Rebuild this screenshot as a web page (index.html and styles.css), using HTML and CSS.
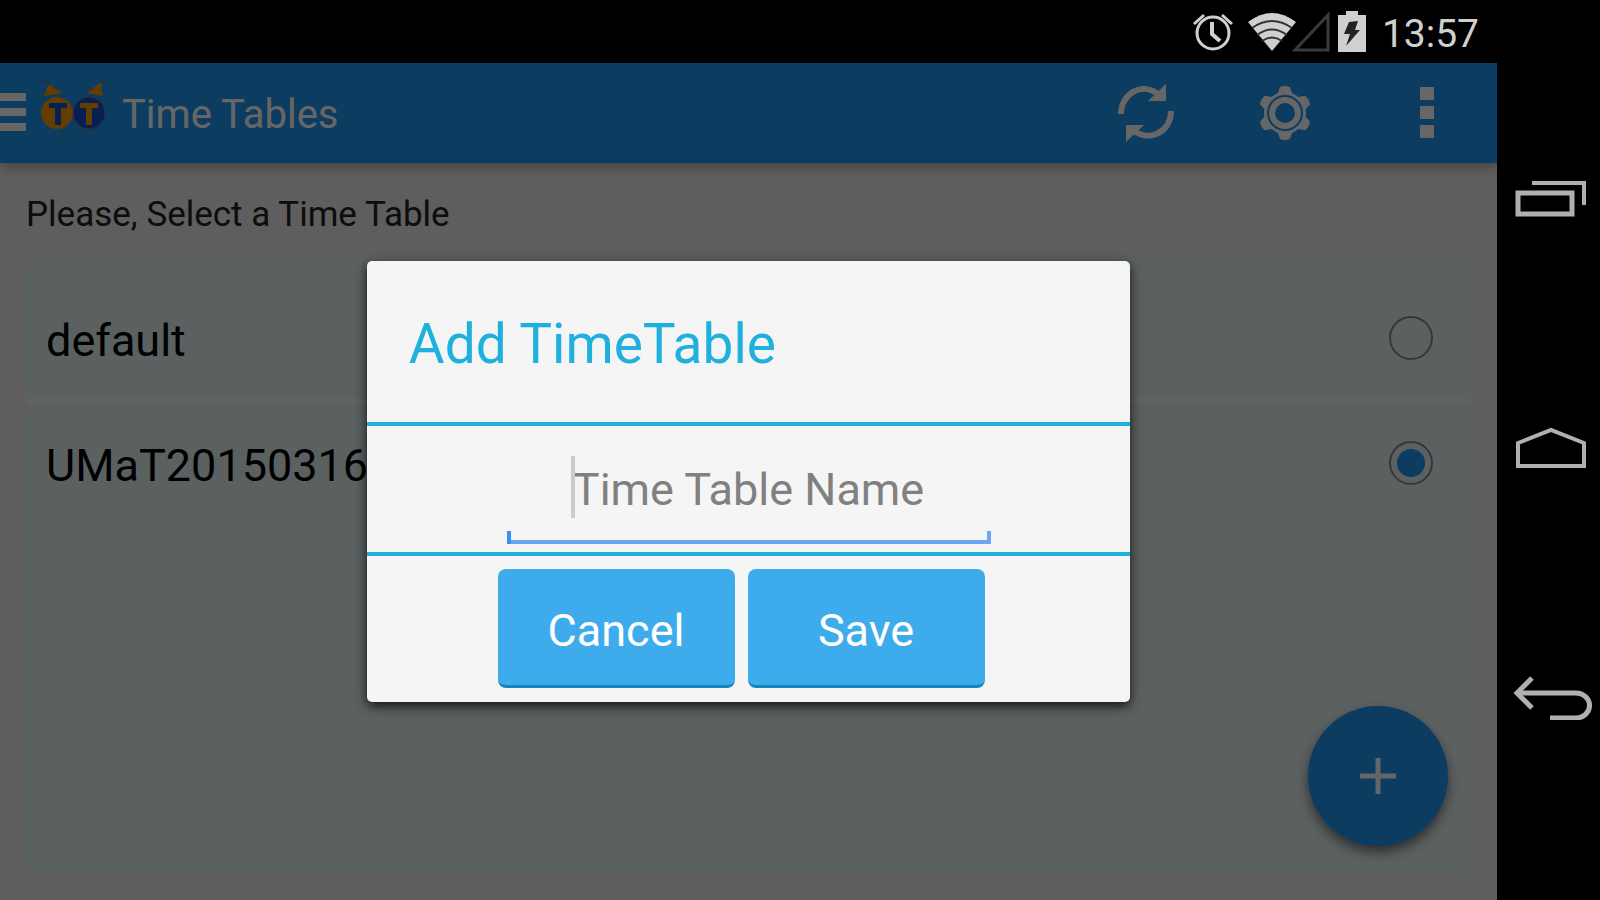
FILE: index.html
```
<!DOCTYPE html>
<html lang="en">
<head>
    <meta charset="UTF-8">
    <meta name="viewport" content="width=device-width, initial-scale=1.0">
    <title>Time Tables</title>
    <link rel="stylesheet" href="styles.css">
</head>
<body>
    <div class="screen">
        <header class="status-bar">
            <svg class="alarm" width="42" height="42" viewBox="0 0 42 42" fill="none" stroke="#d0d0d0" stroke-width="3">
                <circle cx="21" cy="22" r="16"/>
                <path d="M20 11v12l8 7" stroke-width="4"/>
                <path d="M2 13l10-9M40 13L30 4" stroke-width="3"/>
            </svg>
            <svg class="wifi" width="48" height="40" viewBox="0 0 48 40">
                <path d="M0 10Q24-8 48 10L24 39z" fill="#d0d0d0"/>
                <path d="M4 16Q24 2 44 16M9 23Q24 12 39 23M14 29Q24 22 34 29" fill="none" stroke="#333" stroke-width="2"/>
            </svg>
            <svg class="signal" width="38" height="40" viewBox="0 0 38 40">
                <path d="M3 38L36 3V38z" fill="none" stroke="#3a3a3a" stroke-width="3"/>
            </svg>
            <svg class="battery" width="28" height="42" viewBox="0 0 28 42">
                <path d="M8 0h12v4h8v37H0V4h8z" fill="#d0d0d0"/>
                <path d="M11 11l9-1-3 9h5L8 35l4-12H6z" fill="#222"/>
            </svg>
            <time class="clock">13:57</time>
        </header>

        <main class="app">
            <div class="app-bar">
                <button class="menu-btn" aria-label="Menu">
                    <svg width="26" height="40" viewBox="0 0 26 40" fill="#fff">
                        <path d="M0 0h26v8H0zM0 15h26v8H0zM0 30h26v8H0z"/>
                    </svg>
                </button>
                <svg class="logo" width="68" height="64" viewBox="0 0 68 64">
                    <path d="M4 19L7 11l3-4 4 4 9 5zM63 19L61 11l1-6-6 4-9 7z" fill="#ff9800"/>
                    <path d="M9 7L1 3M61 6l5-3M27 51l-7 9M39 51l6 9" stroke="#7a7050" stroke-width="1"/>
                    <circle cx="17" cy="36" r="16" fill="#ff9800"/>
                    <circle cx="49" cy="36" r="16" fill="#1050d0" stroke="#806880" stroke-width="1"/>
                    <path d="M9 26h18v5h-6v17h-6V31H9z" fill="#1050d0"/>
                    <path d="M40 26h18v5h-6v17h-6V31h-6z" fill="#ff9800"/>
                </svg>
                <h1>Time Tables</h1>
                <button class="refresh-btn" aria-label="Refresh">
                    <svg width="56" height="60" viewBox="0 0 56 60">
                        <path d="M3 31C3 10 25-2 41 12M53 28C53 49 31 60 15 47" fill="none" stroke="#fff" stroke-width="6"/>
                        <path d="M48 1v17H30zM8 59V42h18z" fill="#fff"/>
                    </svg>
                </button>
                <button class="settings-btn" aria-label="Settings">
                    <svg width="52" height="56" viewBox="0 0 52 56">
                        <g fill="#fff">
                            <circle cx="26" cy="28" r="21"/>
                            <path id="tooth" d="M18 11l3-9q5-2 10 0l3 9z"/>
                            <use href="#tooth" transform="rotate(60 26 28)"/>
                            <use href="#tooth" transform="rotate(120 26 28)"/>
                            <use href="#tooth" transform="rotate(180 26 28)"/>
                            <use href="#tooth" transform="rotate(240 26 28)"/>
                            <use href="#tooth" transform="rotate(300 26 28)"/>
                        </g>
                        <circle cx="26" cy="28" r="17" fill="none" stroke="#2196f3" stroke-width="2"/>
                        <circle cx="26" cy="28" r="10" fill="#2196f3"/>
                    </svg>
                </button>
                <button aria-label="More options">
                    <svg width="14" height="52" viewBox="0 0 14 52" fill="#fff">
                        <path d="M0 0h14v13H0zM0 19h14v13H0zM0 38h14v13H0z"/>
                    </svg>
                </button>
            </div>

            <div class="content">
                <p class="hint">Please, Select a Time Table</p>
                <div class="list">
                    <label class="item">
                        <span>default</span>
                        <input type="radio" name="table">
                    </label>
                    <label class="item">
                        <span>UMaT20150316</span>
                        <input type="radio" name="table" checked>
                    </label>
                </div>
            </div>

            <button class="fab" aria-label="Add time table">
                <svg width="36" height="36" viewBox="0 0 36 36">
                    <path d="M18 0v36M0 18h36" stroke="#fff" stroke-width="5"/>
                </svg>
            </button>

            <div class="backdrop">
                <form class="dialog" role="dialog" aria-labelledby="dialogTitle">
                    <h2 id="dialogTitle">Add TimeTable</h2>
                    <div class="field">
                        <input type="text" placeholder="Time Table Name" aria-label="Time Table Name">
                    </div>
                    <div class="actions">
                        <button type="button">Cancel</button>
                        <button type="button">Save</button>
                    </div>
                </form>
            </div>
        </main>

        <nav class="nav-bar">
            <button aria-label="Recent apps">
                <svg width="80" height="44" viewBox="0 0 80 44" fill="none" stroke="#b0b0b0" stroke-width="4">
                    <path d="M6 17h54v21H6z" stroke-width="5"/>
                    <path d="M20 7h52v22"/>
                </svg>
            </button>
            <button aria-label="Home">
                <svg width="80" height="44" viewBox="0 0 80 44" fill="none" stroke="#b0b0b0" stroke-width="4">
                    <path d="M6 17L39 4l33 13v23H6z"/>
                </svg>
            </button>
            <button aria-label="Back">
                <svg width="80" height="44" viewBox="0 0 80 44" fill="none" stroke="#b0b0b0" stroke-width="5">
                    <path d="M5 17h59a13 12 0 0 1 0 25H38"/>
                    <path d="M20 2L5 17l15 15"/>
                </svg>
            </button>
        </nav>
    </div>
</body>
</html>
```
FILE: styles.css
```
:root {
    --primary: #2196f3;
    --holo: #1fb0de;
    --button: #3eacec;
    --icon: #d0d0d0;
}

* {
    box-sizing: border-box;
}

body {
    margin: 0;
    background-color: #000;
    font-family: Roboto, sans-serif;
}

button {
    padding: 0;
    border: none;
    background: none;
    font-family: inherit;
    cursor: pointer;
}

svg {
    display: block;
}

h1, h2, p {
    margin: 0;
    font-weight: normal;
}

.screen {
    display: grid;
    grid-template-columns: 1fr 103px;
    grid-template-rows: 63px 1fr;
    min-height: 100vh;
}

/* Status bar */
.status-bar {
    display: flex;
    justify-content: flex-end;
    align-items: center;
    padding-right: 18px;
    color: var(--icon);
}

.alarm {
    margin-right: 14px;
}

.wifi {
    margin-right: -4px;
}

.battery {
    margin: 0 16px 0 8px;
}

.clock {
    padding-top: 4px;
    font-size: 39px;
    line-height: 48px;
}

/* App */
.app {
    position: relative;
    display: flex;
    flex-direction: column;
    background-color: #ebebeb;
}

.app-bar {
    display: flex;
    align-items: center;
    height: 100px;
    padding-right: 63px;
    background-color: var(--primary);
    box-shadow: 0 4px 12px rgba(0, 0, 0, 0.3);
}

.app-bar h1 {
    flex: 1;
    padding-top: 4px;
    color: #fff;
    font-size: 40px;
    line-height: 48px;
}

.app-bar .menu-btn {
    margin-right: 14px;
}

.app-bar .refresh-btn {
    margin-right: 85px;
}

.app-bar .settings-btn {
    margin-right: 109px;
}

.logo {
    margin: 0 14px 8px 0;
}

.content {
    flex: 1;
    display: flex;
    flex-direction: column;
    padding: 28px 26px 26px;
}

.hint {
    margin-bottom: 18px;
    color: #222;
    font-size: 35px;
    line-height: 48px;
}

.list {
    flex: 1;
    background-color: #e4f0f0;
}

.item {
    display: flex;
    justify-content: space-between;
    align-items: center;
    height: 120px;
    padding: 0 38px 0 20px;
    font-size: 45px;
}

.item span {
    padding-top: 4px;
}

.item:first-child {
    height: 146px;
    padding-top: 20px;
    border-bottom: 4px solid #f4fcff;
}

.item input {
    display: grid;
    place-items: center;
    width: 44px;
    height: 44px;
    margin: 0;
    appearance: none;
    border: 2px solid #888;
    border-radius: 50%;
}

.item input:checked::before {
    content: "";
    width: 28px;
    height: 28px;
    border-radius: 50%;
    background-color: var(--primary);
}

.fab {
    position: absolute;
    right: 49px;
    bottom: 54px;
    display: grid;
    place-items: center;
    width: 140px;
    height: 140px;
    border-radius: 50%;
    background-color: var(--primary);
    box-shadow: 0 6px 12px rgba(0, 0, 0, 0.5);
}

/* Dialog */
.backdrop {
    position: absolute;
    inset: 0;
    display: grid;
    place-items: center;
    background-color: rgba(0, 0, 0, 0.6);
}

.dialog {
    width: 51%;
    border-radius: 5px;
    background-color: #f5f5f5;
    box-shadow: 0 4px 12px rgba(0, 0, 0, 0.8);
}

.dialog h2 {
    padding: 51px 42px 46px;
    border-bottom: 4px solid var(--holo);
    color: var(--holo);
    font-size: 55px;
    line-height: 64px;
}

.field {
    position: relative;
    display: flex;
    justify-content: center;
    padding: 20px 0 8px;
    border-bottom: 4px solid var(--holo);
}

.field input {
    width: 484px;
    height: 98px;
    padding: 0 0 12px;
    border: none;
    outline: none;
    font-family: inherit;
    font-size: 45px;
    text-align: center;
    /* bracket-shaped underline */
    background:
        linear-gradient(#3a8ff0, #3a8ff0) left bottom / 4px 13px no-repeat,
        linear-gradient(#6ca6f2, #6ca6f2) right bottom / 4px 13px no-repeat,
        linear-gradient(#6ca6f2, #6ca6f2) left bottom / 100% 4px no-repeat;
}

.field input::placeholder {
    color: #808080;
    opacity: 1;
}

/* text cursor */
.field::before {
    content: "";
    position: absolute;
    top: 30px;
    left: calc(50% - 178px);
    width: 4px;
    height: 62px;
    background-color: #ccc;
}

.actions {
    display: flex;
    justify-content: center;
    gap: 13px;
    padding: 13px 28px 14px 13px;
}

.actions button {
    width: 237px;
    height: 119px;
    padding-top: 6px;
    border-bottom: 3px solid #1585bd;
    border-radius: 8px;
    background-color: var(--button);
    color: #fff;
    font-size: 45px;
}

/* Navigation bar */
.nav-bar {
    grid-column: 2;
    grid-row: 1 / 3;
    display: flex;
    flex-direction: column;
    justify-content: center;
    align-items: flex-end;
    gap: 206px;
    padding: 0 8px 4px 0;
}
```
